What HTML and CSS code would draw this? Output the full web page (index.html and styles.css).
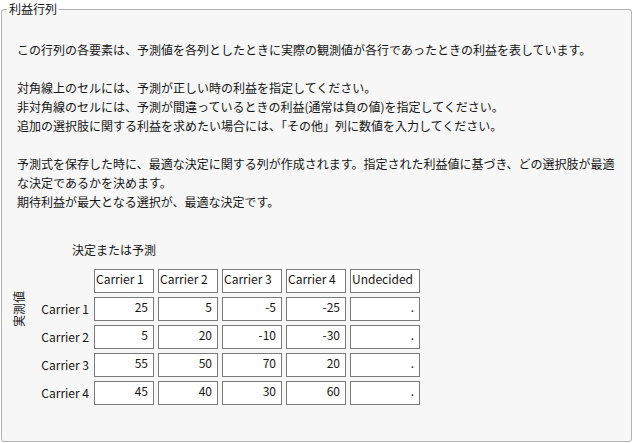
FILE: index.html
```html
<!DOCTYPE html>
<html lang="ja">
<head>
<meta charset="utf-8">
<title>利益行列</title>
<link rel="stylesheet" href="styles.css">
</head>
<body>
<fieldset class="panel">
  <legend class="panel-title">利益行列</legend>
  <div class="desc">
    <p>この行列の各要素は、予測値を各列としたときに実際の観測値が各行であったときの利益を表しています。</p>
    <p>対角線上のセルには、予測が正しい時の利益を指定してください。<br>非対角線のセルには、予測が間違っているときの利益(通常は負の値)を指定してください。<br>追加の選択肢に関する利益を求めたい場合には、「その他」列に数値を入力してください。</p>
    <p>予測式を保存した時に、最適な決定に関する列が作成されます。指定された利益値に基づき、どの選択肢が最適な決定であるかを決めます。<br>期待利益が最大となる選択が、最適な決定です。</p>
  </div>
  <div class="matrix-title">決定または予測</div>
  <div class="matrix">
    <div class="axis-label">実測値</div>
    <div class="corner"></div>
    <div class="cell head">Carrier 1</div>
    <div class="cell head">Carrier 2</div>
    <div class="cell head">Carrier 3</div>
    <div class="cell head">Carrier 4</div>
    <div class="cell head">Undecided</div>

    <div class="row-label">Carrier 1</div>
    <div class="cell num">25</div>
    <div class="cell num">5</div>
    <div class="cell num">-5</div>
    <div class="cell num">-25</div>
    <div class="cell num">.</div>

    <div class="row-label">Carrier 2</div>
    <div class="cell num">5</div>
    <div class="cell num">20</div>
    <div class="cell num">-10</div>
    <div class="cell num">-30</div>
    <div class="cell num">.</div>

    <div class="row-label">Carrier 3</div>
    <div class="cell num">55</div>
    <div class="cell num">50</div>
    <div class="cell num">70</div>
    <div class="cell num">20</div>
    <div class="cell num">.</div>

    <div class="row-label">Carrier 4</div>
    <div class="cell num">45</div>
    <div class="cell num">40</div>
    <div class="cell num">30</div>
    <div class="cell num">60</div>
    <div class="cell num">.</div>
  </div>
</fieldset>
</body>
</html>
```

FILE: styles.css
```css
html, body {
  margin: 0;
  padding: 0;
  background: #ffffff;
}
body {
  font-family: "Noto Sans CJK JP", "Noto Sans", sans-serif;
  font-size: 12px;
  color: #161616;
}
.panel {
  box-sizing: border-box;
  margin: 0 1px 0 1px;
  width: 631px;
  height: 442px;
  border: 1px solid #b2b2b2;
  border-radius: 3px;
  background: #f7f7f7;
  padding: 22px 8px 0 10px;
  min-width: 0;
}
.panel-title {
  margin-left: -5px;
  padding: 0 2px;
  font-size: 12px;
  line-height: 18px;
  color: #161616;
}
.desc {
  padding-left: 5px;
  width: 606px;
  line-height: 19px;
}
.desc p {
  margin: 0 0 19px 0;
}
.desc p:last-child {
  margin-bottom: 0;
}
.matrix-title {
  margin-top: 29px;
  padding-left: 60px;
  line-height: 19px;
}
.matrix {
  margin-top: 10px;
  display: grid;
  grid-template-columns: 14px 60px repeat(4, 60px) 70px;
  grid-template-rows: repeat(5, 24px);
  column-gap: 4px;
  row-gap: 4px;
}
.axis-label {
  grid-column: 1;
  grid-row: 2;
  align-self: center;
  justify-self: center;
  writing-mode: vertical-rl;
  text-orientation: sideways;
  transform: rotate(180deg);
  line-height: 14px;
  white-space: nowrap;
}
.corner {
  grid-column: 1 / 3;
  grid-row: 1;
}
.row-label {
  grid-column: 2;
  text-align: right;
  padding-right: 1px;
  line-height: 24px;
  white-space: nowrap;
}
.cell {
  box-sizing: border-box;
  border: 1px solid #7a7a7a;
  background: #ffffff;
  line-height: 18px;
  white-space: nowrap;
  overflow: hidden;
}
.cell.head {
  padding-left: 1px;
}
.cell.num {
  text-align: right;
  padding-right: 5px;
}
```
